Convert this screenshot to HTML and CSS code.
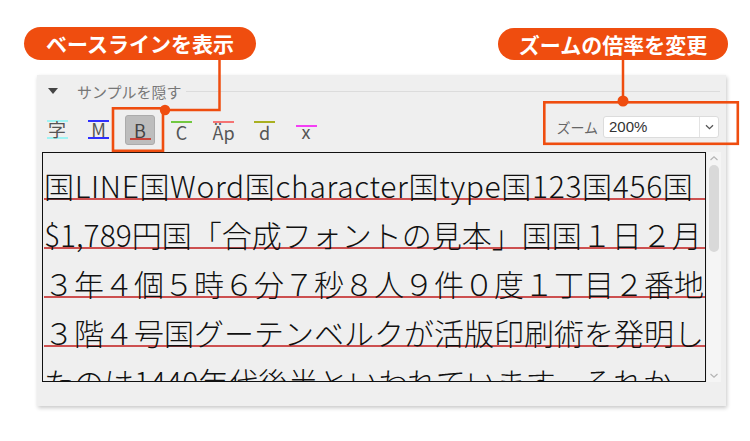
FILE: index.html
```html
<!DOCTYPE html>
<html lang="ja">
<head>
<meta charset="utf-8">
<title>サンプル</title>
<link rel="stylesheet" href="styles.css">
</head>
<body>
<div class="stage">
  <div class="panel">
    <div class="header">
      <span class="tri"></span>
      <span class="htitle">サンプルを隠す</span>
      <span class="hline"></span>
    </div>
    <div class="toolbar">
      <div class="tools">
        <div class="tool"><span class="glyph both cyan">字</span></div>
        <div class="tool"><span class="glyph both blue">M</span></div>
        <div class="tool active"><span class="glyph under red">B</span></div>
        <div class="tool"><span class="glyph over green">C</span></div>
        <div class="tool"><span class="glyph over pink">Äp</span></div>
        <div class="tool"><span class="glyph over olive">d</span></div>
        <div class="tool"><span class="glyph xh magenta">x</span></div>
      </div>
      <div class="zoom">
        <span class="zlabel">ズーム</span>
        <div class="select">
          <span class="sval">200%</span>
          <span class="sbtn"><svg width="9" height="6" viewBox="0 0 9 6"><path d="M1 1.2 L4.5 4.6 L8 1.2" fill="none" stroke="#555" stroke-width="1.3"/></svg></span>
        </div>
      </div>
    </div>
    <div class="viewer">
      <div class="sample">
        <div class="line wide">国LINE国Word国character国type国123国456国</div>
        <div class="line">$1,789円国「合成フォントの見本」国国１日２月</div>
        <div class="line">３年４個５時６分７秒８人９件０度１丁目２番地</div>
        <div class="line">３階４号国グーテンベルクが活版印刷術を発明し</div>
        <div class="line">たのは1440年代後半といわれています。それか</div>
      </div>
      <div class="scrollbar">
        <svg class="arrow" width="10" height="7" viewBox="0 0 10 7"><path d="M1.5 5 L5 1.8 L8.5 5" fill="none" stroke="#b4b4b4" stroke-width="1.2"/></svg>
        <div class="thumb"></div>
        <div class="track-rest"></div>
        <svg class="arrow" width="10" height="7" viewBox="0 0 10 7"><path d="M1.5 2 L5 5.2 L8.5 2" fill="none" stroke="#b4b4b4" stroke-width="1.2"/></svg>
      </div>
    </div>
  </div>

  <div class="callout c1">ベースラインを表示</div>
  <div class="callout c2">ズームの倍率を変更</div>

  <svg class="annot" width="750" height="441" viewBox="0 0 750 441">
    <path d="M219.5 60 V110 H165" fill="none" stroke="#ef4d0f" stroke-width="2.5"/>
    <rect x="113" y="108.3" width="50" height="42.5" fill="none" stroke="#ef4d0f" stroke-width="2.6"/>
    <circle cx="165" cy="110" r="5.2" fill="#ef4d0f"/>
    <path d="M623 60 V101" fill="none" stroke="#ef4d0f" stroke-width="2.5"/>
    <rect x="544.3" y="102.3" width="193.5" height="41.5" fill="none" stroke="#ef4d0f" stroke-width="2.6"/>
    <circle cx="623" cy="101" r="5.5" fill="#ef4d0f"/>
  </svg>
</div>
</body>
</html>
```

FILE: styles.css
```css
html, body {
  margin: 0;
  background: #ffffff;
}

.stage {
  position: relative;
  width: 750px;
  height: 441px;
  box-sizing: border-box;
  padding: 75px 0 0 37px;
  overflow: hidden;
  font-family: "Noto Sans CJK JP", "Noto Sans", sans-serif;
}

.panel {
  width: 689px;
  height: 331px;
  box-sizing: border-box;
  background: #efefef;
  box-shadow: 1px 2px 4px rgba(0, 0, 0, 0.22);
  padding: 0 5px;
  display: flex;
  flex-direction: column;
}

/* header */
.header {
  height: 32px;
  display: flex;
  align-items: center;
  padding-left: 6px;
}

.tri {
  width: 0;
  height: 0;
  border-left: 5.5px solid transparent;
  border-right: 5.5px solid transparent;
  border-top: 6px solid #444;
  margin-right: 19px;
}

.htitle {
  font-size: 15px;
  line-height: 1;
  color: #777;
}

.hline {
  flex: 1;
  height: 1px;
  background: #dcdcdc;
  margin: 0 1px 0 4px;
}

/* toolbar */
.toolbar {
  height: 45px;
  display: flex;
  align-items: center;
  justify-content: space-between;
}

.tools {
  display: flex;
  gap: 11.5px;
}

.tool {
  width: 30px;
  height: 30px;
  box-sizing: border-box;
  display: flex;
  justify-content: center;
  align-items: flex-start;
  border-radius: 3px;
  color: #555;
}

.tool.active {
  background: #bdbdbd;
  border: 1px solid #ababab;
  color: #444;
}

.glyph {
  display: block;
  width: 21px;
  text-align: center;
  font-size: 18px;
  line-height: 15px;
  height: 15px;
}

.glyph.both {
  margin-top: 5.5px;
  border-top: 2px solid;
  border-bottom: 2px solid;
}

.glyph.over {
  margin-top: 6px;
  border-top: 2px solid;
  padding-top: 2px;
}

.glyph.under {
  margin-top: 5px;
  padding-top: 2px;
  border-bottom: 2px solid;
}

.glyph.xh {
  margin-top: 10.5px;
  border-top: 2px solid;
  line-height: 6px;
  height: 10px;
  padding-top: 1px;
}

.glyph.cyan { border-color: #9ef3f3; }
.glyph.blue { border-color: #2f2fff; }
.glyph.red { border-color: #c8443a; }
.glyph.green { border-color: #72c840; }
.glyph.pink { border-color: #f57474; }
.glyph.olive { border-color: #a9b021; }
.glyph.magenta { border-color: #f43ff4; }

/* zoom */
.zoom {
  align-self: flex-start;
  margin-top: 9px;
  margin-right: 2px;
  display: flex;
  align-items: center;
  gap: 5px;
}

.zlabel {
  font-size: 14px;
  line-height: 22px;
  color: #666;
}

.select {
  width: 116px;
  height: 22px;
  box-sizing: border-box;
  border: 1px solid #dcdcdc;
  border-radius: 3px;
  background: #fff;
  display: flex;
}

.sval {
  flex: 1;
  padding-left: 5px;
  font-family: "Liberation Sans", Arial, sans-serif;
  font-size: 15px;
  line-height: 20px;
  color: #333;
}

.sbtn {
  width: 18px;
  border-left: 1px solid #e3e3e3;
  display: flex;
  align-items: center;
  justify-content: center;
}

/* viewer */
.viewer {
  height: 230px;
  display: flex;
}

.sample {
  width: 664px;
  box-sizing: border-box;
  border: 1px solid #111;
  overflow: hidden;
  padding: 8px 0 0 1px;
  color: #111;
}

.line {
  height: 49px;
  font-size: 30px;
  line-height: 49px;
  font-weight: 300;
  white-space: nowrap;
  background: linear-gradient(rgba(196, 40, 40, 0.8), rgba(196, 40, 40, 0.8)) 0 37px / 100% 2px no-repeat;
}

.line.wide {
  letter-spacing: 0.65px;
}

.scrollbar {
  width: 14px;
  margin-left: 1px;
  background: #f5f5f5;
  display: flex;
  flex-direction: column;
  align-items: center;
}

.arrow {
  flex: none;
  margin: 3px 0;
}

.thumb {
  width: 10px;
  height: 87px;
  border-radius: 5px;
  background: #d9d9d9;
}

.track-rest {
  flex: 1;
}

/* callouts */
.callout {
  position: absolute;
  height: 33px;
  border-radius: 17px;
  background: #ef4d0f;
  color: #fff;
  font-weight: 700;
  font-size: 21px;
  line-height: 33px;
  text-align: center;
  white-space: nowrap;
}

.c1 {
  left: 24px;
  top: 27px;
  width: 232px;
}

.c2 {
  left: 498px;
  top: 28px;
  width: 230px;
  height: 32px;
  line-height: 32px;
}

.annot {
  position: absolute;
  left: 0;
  top: 0;
  pointer-events: none;
}
```
